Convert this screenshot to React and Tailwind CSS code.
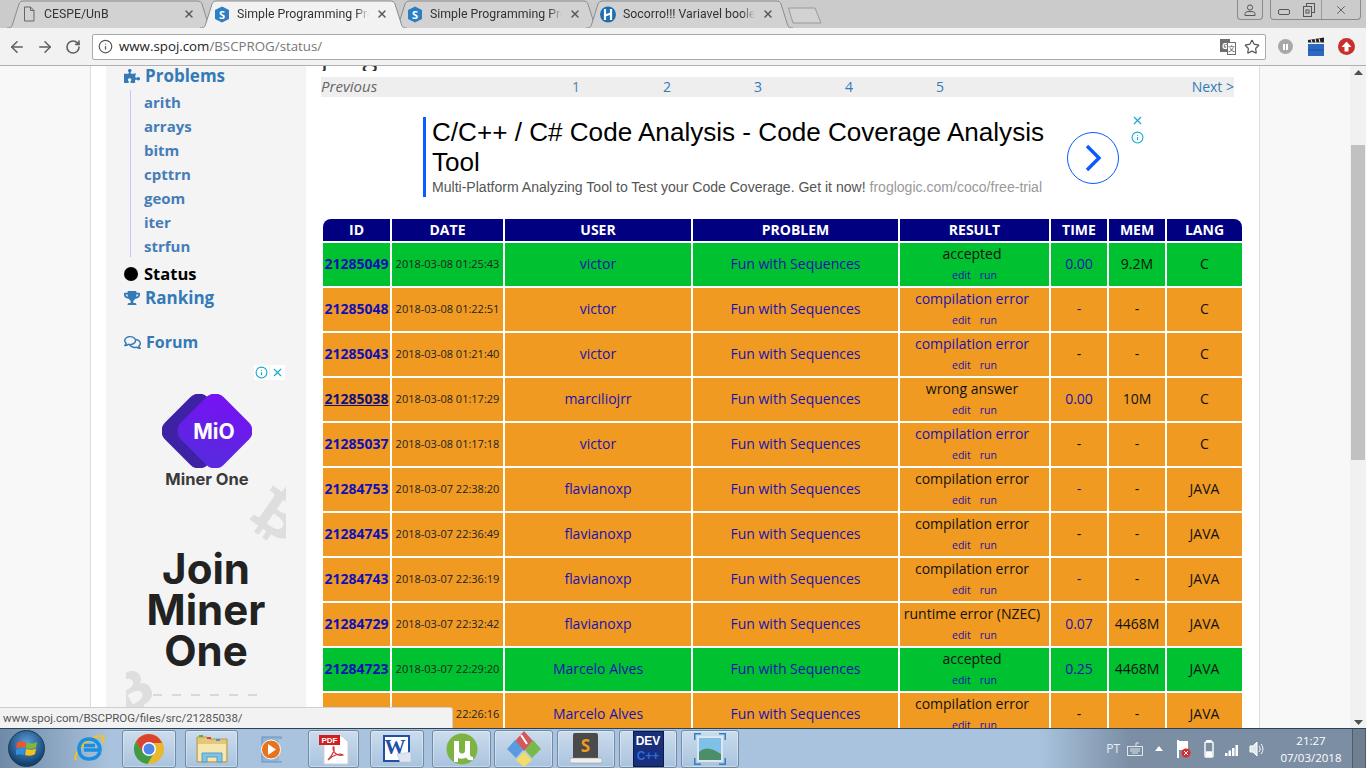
import React from 'react';
import { ArrowLeft, ArrowRight, RotateCw, Info, Star, X } from 'lucide-react';
import { FaPuzzlePiece, FaTrophy, FaRegComments, FaBtc } from 'react-icons/fa';

const BLUE = 'text-[#1a12b0]';

const rows = [
  { id: '21285049', date: '2018-03-08 01:25:43', user: 'victor', result: 'accepted', time: '0.00', mem: '9.2M', lang: 'C', ok: true, timeLink: true },
  { id: '21285048', date: '2018-03-08 01:22:51', user: 'victor', result: 'compilation error', resultLink: true, time: '-', mem: '-', lang: 'C', timeLink: true },
  { id: '21285043', date: '2018-03-08 01:21:40', user: 'victor', result: 'compilation error', resultLink: true, time: '-', mem: '-', lang: 'C' },
  { id: '21285038', date: '2018-03-08 01:17:29', user: 'marciliojrr', result: 'wrong answer', time: '0.00', mem: '10M', lang: 'C', timeLink: true, hover: true },
  { id: '21285037', date: '2018-03-08 01:17:18', user: 'victor', result: 'compilation error', resultLink: true, time: '-', mem: '-', lang: 'C' },
  { id: '21284753', date: '2018-03-07 22:38:20', user: 'flavianoxp', result: 'compilation error', time: '-', mem: '-', lang: 'JAVA', timeLink: true },
  { id: '21284745', date: '2018-03-07 22:36:49', user: 'flavianoxp', result: 'compilation error', time: '-', mem: '-', lang: 'JAVA' },
  { id: '21284743', date: '2018-03-07 22:36:19', user: 'flavianoxp', result: 'compilation error', time: '-', mem: '-', lang: 'JAVA', timeLink: true },
  { id: '21284729', date: '2018-03-07 22:32:42', user: 'flavianoxp', result: 'runtime error (NZEC)', time: '0.07', mem: '4468M', lang: 'JAVA', timeLink: true },
  { id: '21284723', date: '2018-03-07 22:29:20', user: 'Marcelo Alves', result: 'accepted', time: '0.25', mem: '4468M', lang: 'JAVA', ok: true, timeLink: true },
  { id: '21284712', date: '2018-03-07 22:26:16', user: 'Marcelo Alves', result: 'compilation error', time: '-', mem: '-', lang: 'JAVA' },
];

const SpojIcon = () => (
  <svg width="16" height="17" viewBox="0 0 16 17" className="shrink-0">
    <path d="M8 0.5 L15 4 V13 L8 16.5 L1 13 V4 Z" fill="#2d7fc1" />
    <text x="8" y="12.5" textAnchor="middle" fontSize="11" fontWeight="700" fill="#fff" fontFamily="Open Sans">S</text>
  </svg>
);

const DocIcon = () => (
  <svg width="12" height="16" viewBox="0 0 12 16" className="shrink-0" fill="none" stroke="#666" strokeWidth="1">
    <path d="M1.5 1 H7.5 L11 4.5 V15 H1.5 Z M7.5 1 V4.5 H11" />
  </svg>
);

const HiIcon = () => (
  <svg width="16" height="17" viewBox="0 0 16 17" className="shrink-0">
    <circle cx="8" cy="8.5" r="8" fill="#1a6fb5" />
    <path d="M5 3 V14 M11 3 V14" stroke="#fff" strokeWidth="2.2" />
    <path d="M5 9.5 L11 7.5" stroke="#fff" strokeWidth="2.2" />
  </svg>
);

const Tab = ({ title, icon, active, width = 207 }) => (
  <div className={`relative h-[28px] shrink-0 -mr-[14px] ${active ? 'z-10' : ''}`} style={{ width }}>
    <svg width={width} height="28" viewBox={`0 0 ${width} 28`} className="absolute inset-0">
      <path
        d={`M0 28 C5 28 5 26 6 23 L12 4 C13 2 14 1 17 1 H${width - 17} C${width - 14} 1 ${width - 13} 2 ${width - 12} 4 L${width - 6} 23 C${width - 5} 26 ${width - 5} 28 ${width} 28`}
        fill={active ? '#f2f2f2' : '#d2d2d2'}
        stroke="#8c8c8c"
      />
    </svg>
    <div className="relative flex items-center h-[28px] pl-[13px]">
      <span className="w-[18px] flex justify-center shrink-0">{icon}</span>
      <span className="ml-[6px] w-[132px] overflow-hidden whitespace-nowrap font-['Roboto'] text-[12.3px] text-[#333] [mask-image:linear-gradient(90deg,#000_90%,transparent)]">{title}</span>
      <X size={12} strokeWidth={3} className="ml-[7px] text-[#5a5a5a] shrink-0" />
    </div>
  </div>
);

const TabStrip = () => (
  <div className="h-[28px] bg-[#cbcbcb] flex pl-[7px] overflow-hidden relative">
    <Tab title="CESPE/UnB" icon={<DocIcon />} />
    <Tab title="Simple Programming Pro" icon={<SpojIcon />} active />
    <Tab title="Simple Programming Pro" icon={<SpojIcon />} />
    <Tab title="Socorro!!! Variavel boole" icon={<HiIcon />} />
    <svg width="36" height="17" viewBox="0 0 36 17" className="ml-[8px] mt-[7px] shrink-0" fill="#d2d2d2" stroke="#9a9a9a">
      <path d="M1.5 1 H28 L34 16 H6 Z" />
    </svg>
    <div className="ml-auto flex items-start mr-[5px]">
      <div className="w-[26px] h-[20px] border border-t-0 border-[#8a8a8a] rounded-b-[4px] flex items-center justify-center">
        <svg width="12" height="12" viewBox="0 0 12 12" fill="none" stroke="#555"><circle cx="6" cy="3.5" r="2.6" /><path d="M1 11.5 V9.5 C1 8 3 7.5 6 7.5 C9 7.5 11 8 11 9.5 V11.5 Z" /></svg>
      </div>
      <div className="ml-[7px] w-[91px] h-[20px] border border-t-0 border-[#8a8a8a] rounded-b-[4px] flex items-center">
        <div className="w-[26px] flex justify-center"><div className="w-[12px] h-[6px] border border-[#555] rounded-[2px] mt-[4px]" /></div>
        <div className="w-[25px] h-[19px] flex justify-center items-center border-r border-[#9a9a9a]">
          <svg width="12" height="14" viewBox="0 0 12 14" fill="none" stroke="#555"><rect x="3.5" y="0.5" width="8" height="9" /><rect x="0.5" y="3.5" width="8" height="10" fill="#cbcbcb" /><rect x="3" y="7" width="3" height="3" /></svg>
        </div>
        <div className="flex-1 flex justify-center"><X size={14} strokeWidth={1.5} className="text-[#555]" /></div>
      </div>
    </div>
  </div>
);

const TranslateIcon = () => (
  <svg width="16" height="16" viewBox="0 0 16 16">
    <rect x="0" y="0" width="10" height="13" fill="#6e6e6e" />
    <text x="5" y="10" textAnchor="middle" fontSize="8" fontWeight="700" fill="#fff" fontFamily="Open Sans">G</text>
    <rect x="7.5" y="3.5" width="8" height="12" fill="#fff" stroke="#6e6e6e" />
    <text x="11.5" y="12" textAnchor="middle" fontSize="7" fill="#555" fontFamily="Noto Sans CJK SC">文</text>
  </svg>
);

const ClapperIcon = () => (
  <svg width="18" height="19" viewBox="0 0 18 19">
    <rect x="1" y="7" width="16" height="12" fill="#2a68c4" />
    <path d="M1 13 H17" stroke="#1d4e9a" />
    <path d="M1 3 L17 0.5 V5.5 H1 Z" fill="#222" />
    <path d="M4 2.5 L5 5.5 M8 2 L9 5.5 M12 1.5 L13 5.5" stroke="#fff" />
  </svg>
);

const Toolbar = () => (
  <div className="h-[38px] bg-[#f2f2f2] border-b border-[#b0b0b0] flex items-center shrink-0">
    <ArrowLeft size={18} strokeWidth={2} className="ml-[8px] text-[#5f5f5f]" />
    <ArrowRight size={18} strokeWidth={2} className="ml-[10px] text-[#5f5f5f]" />
    <RotateCw size={16} strokeWidth={2.4} className="ml-[11px] text-[#5f5f5f]" />
    <div className="ml-[11px] w-[1174px] h-[26px] bg-white border border-[#a9a9a9] rounded-[2px] flex items-center">
      <Info size={15} strokeWidth={2} className="ml-[5px] text-[#5a5a5a]" />
      <span className="ml-[6px] text-[13.3px] text-[#222]">www.spoj.com<span className="text-[#777]">/BSCPROG/status/</span></span>
      <div className="ml-auto flex items-center">
        <TranslateIcon />
        <Star size={16} strokeWidth={1.8} className="ml-[8px] mr-[5px] text-[#555]" />
      </div>
    </div>
    <div className="ml-[12px] w-[15px] h-[15px] rounded-full bg-[#a8a8a8] flex items-center justify-center gap-[1px]">
      <span className="w-[2px] h-[6px] bg-white" /><span className="w-[2px] h-[6px] bg-white" />
    </div>
    <span className="ml-[14px]"><ClapperIcon /></span>
    <div className="ml-[13px] w-[17px] h-[17px] rounded-full bg-[#c9302c] flex items-center justify-center">
      <svg width="11" height="11" viewBox="0 0 11 11" fill="#fff"><path d="M5.5 0.5 L10.5 6 H7.5 V10.5 H3.5 V6 H0.5 Z" /></svg>
    </div>
  </div>
);

const MinerAd = () => (
  <div className="relative mt-[11px] ml-[20px] w-[160px] h-[345px] flex flex-col items-center overflow-hidden">
    <FaBtc size={58} className="absolute top-[120px] left-[124px] rotate-[35deg] text-[#dedede]" />
    <FaBtc size={52} className="absolute top-[300px] left-[-22px] rotate-[-30deg] text-[#dedede]" />
    <div className="absolute top-0 right-[1px] flex gap-[1px] text-[#12a8d0]">
      <span className="w-[15px] h-[15px] bg-white flex items-center justify-center"><Info size={13} /></span>
      <span className="w-[15px] h-[15px] bg-white flex items-center justify-center"><X size={13} /></span>
    </div>
    <svg width="90" height="74" viewBox="0 0 90 74" className="relative mt-[29px] ml-[2px] shrink-0">
      <defs>
        <linearGradient id="mio" x1="0" y1="0" x2="0.5" y2="1">
          <stop offset="0" stopColor="#7a10f5" />
          <stop offset="1" stopColor="#5a28e0" />
        </linearGradient>
      </defs>
      <rect x="7" y="7" width="60" height="60" rx="12" transform="rotate(45 37 37)" fill="#3e22a6" />
      <rect x="23" y="7" width="60" height="60" rx="12" transform="rotate(45 53 37)" fill="url(#mio)" />
      <text x="52" y="45" textAnchor="middle" fontSize="21" fontWeight="700" fill="#fff" fontFamily="Inter">MiO</text>
    </svg>
    <div className="relative mt-[1px] ml-[2px] text-[16.5px] font-bold text-[#3a3a3a] font-['Inter'] leading-[20px]">Miner One</div>
    <div className="relative mt-[59px] text-center text-[42px] font-bold leading-[41px] text-[#222] font-['Inter']">Join<br />Miner<br />One</div>
    <div className="absolute top-[329px] left-[27px] flex gap-[10px]">
      {[0, 1, 2, 3, 4, 5].map((i) => <span key={i} className="w-[9px] h-[2px] bg-[#d8d8d8]" />)}
    </div>
  </div>
);

const Sidebar = () => (
  <aside className="w-[200px] shrink-0 bg-[#f4f4f4] font-['Open_Sans'] font-bold">
    <div className="pl-[18px]">
      <a className="flex items-center h-[20px] text-[17px] text-[#337ab7]"><FaPuzzlePiece size={16} /><span className="ml-[5px]">Problems</span></a>
      <ul className="ml-[6px] mt-[4px] pl-[13px] border-l border-[#c4c4ff] h-[167px] text-[15px] text-[#467db8] leading-[24px]">
        {['arith', 'arrays', 'bitm', 'cpttrn', 'geom', 'iter', 'strfun'].map((s) => <li key={s}>{s}</li>)}
      </ul>
      <div className="mt-[5px] flex items-center h-[24px] text-[16.5px] text-black">
        <span className="w-[14px] h-[14px] rounded-full bg-black" /><span className="ml-[6px]">Status</span>
      </div>
      <a className="flex items-center h-[24px] text-[17px] text-[#337ab7]"><FaTrophy size={16} /><span className="ml-[5px]">Ranking</span></a>
      <a className="mt-[20px] flex items-center h-[24px] text-[16px] text-[#337ab7]"><FaRegComments size={17} /><span className="ml-[5px]">Forum</span></a>
    </div>
    <MinerAd />
  </aside>
);

const Pager = () => (
  <div className="mt-[6px] w-[913px] h-[20px] bg-[#eee] flex items-center text-[14px] leading-[20px] text-[#337ab7]">
    <span className="w-[209.5px] pb-[2px] italic text-[15px] text-[#666]">Previous</span>
    {[1, 2, 3, 4, 5].map((n) => (
      <span key={n} className={`w-[91px] text-center ${n === 1 ? 'text-[#5f7f98]' : ''}`}>{n}</span>
    ))}
    <span className="ml-auto">Next &gt;</span>
  </div>
);

const TextAd = () => (
  <div className="mt-[20px] h-[80px] ml-[102px] w-[724px] flex font-['Liberation_Sans']">
    <div className="w-[627px] border-l-[3px] border-[#0a5cff] pl-[6px]">
      <div className="text-[26.1px] leading-[30px] text-black">C/C++ / C# Code Analysis - Code Coverage Analysis Tool</div>
      <div className="mt-[2px] text-[14.05px] leading-[17px] text-[#555] whitespace-nowrap">
        Multi-Platform Analyzing Tool to Test your Code Coverage. Get it now! <span className="text-[#999]">froglogic.com/coco/free-trial</span>
      </div>
    </div>
    <div className="ml-[17px] mt-[15px] w-[52px] h-[52px] shrink-0 rounded-full border border-[#0a5cff] flex items-center justify-center">
      <svg width="18" height="28" viewBox="0 0 18 28" fill="none" stroke="#0a5cff" strokeWidth="3.4"><path d="M3 2 L15 14 L3 26" /></svg>
    </div>
    <div className="ml-[12px] flex flex-col items-center text-[#12a8d0] shrink-0">
      <X size={13} className="mt-[-3px]" />
      <Info size={13} className="mt-[4px]" />
    </div>
  </div>
);

const StatusTable = () => (
  <table className="mt-[20px] w-[923px] table-fixed border-separate [border-spacing:2px] text-[14px] text-center text-[#111]">
    <colgroup>
      {[67, 111, 186, 205, 149, 56, 56, 75].map((w, i) => <col key={i} style={{ width: w }} />)}
    </colgroup>
    <thead>
      <tr className="h-[22px] bg-[#000080] text-white font-bold text-[14px] leading-[20px]">
        <th className="p-0 pb-[1px] rounded-tl-[8px]">ID</th>
        <th className="p-0 pb-[1px]">DATE</th>
        <th className="p-0 pb-[1px]">USER</th>
        <th className="p-0 pb-[1px]">PROBLEM</th>
        <th className="p-0 pb-[1px]">RESULT</th>
        <th className="p-0 pb-[1px]">TIME</th>
        <th className="p-0 pb-[1px]">MEM</th>
        <th className="p-0 pb-[1px] rounded-tr-[8px]">LANG</th>
      </tr>
    </thead>
    <tbody>
      {rows.map((r) => (
        <tr key={r.id} className={`h-[43px] ${r.ok ? 'bg-[#00c12f]' : 'bg-[#f09a22]'}`}>
          <td className={`p-0 pb-[2px] font-bold ${r.hover ? 'underline text-[#10107a]' : 'text-[#1010b8]'}`}>{r.id}</td>
          <td className="p-0 text-[11px] text-[#222]">{r.date}</td>
          <td className={`p-0 pb-[2px] ${BLUE}`}>{r.user}</td>
          <td className={`p-0 pb-[2px] ${BLUE}`}>Fun with Sequences</td>
          <td className="p-0 pb-[2px]">
            <div className={`-mt-[1px] leading-[19px] pr-[5px] ${r.resultLink ? BLUE : ''}`}>{r.result}</div>
            <div className={`mt-[5px] leading-[15px] text-[10.5px] flex justify-center gap-[9px] ${BLUE}`}><span>edit</span><span>run</span></div>
          </td>
          <td className={`p-0 pb-[2px] ${r.timeLink ? BLUE : ''}`}>{r.time}</td>
          <td className="p-0 pb-[2px]">{r.mem}</td>
          <td className="p-0 pb-[2px]">{r.lang}</td>
        </tr>
      ))}
    </tbody>
  </table>
);

const Scrollbar = () => (
  <div className="w-[16px] shrink-0 bg-[#f1f1f1] flex flex-col items-center relative">
    <svg width="9" height="5" viewBox="0 0 9 5" className="mt-[4px] shrink-0" fill="#505050"><path d="M4.5 0 L9 5 H0 Z" /></svg>
    <div className="w-[14px] h-[315px] bg-[#c1c1c1] mt-[70px] shrink-0" />
    <svg width="9" height="5" viewBox="0 0 9 5" className="mt-auto mb-[3px] shrink-0" fill="#505050"><path d="M4.5 5 L9 0 H0 Z" /></svg>
  </div>
);

const Page = () => (
  <div className="relative flex-1 flex overflow-hidden min-h-0 font-['Open_Sans']">
    <div className="flex-1 flex bg-[#f8f8f8] overflow-hidden">
      <div className="ml-[90px] w-[1170px] h-[800px] shrink-0 bg-white border-x border-[#dcdcdc] pl-[15px] flex">
        <Sidebar />
        <main className="pl-[15px]">
          <div className="-mt-[27px] h-[32px] text-[28px] leading-[32px] text-[#333] overflow-hidden">judge status</div>
          <Pager />
          <TextAd />
          <StatusTable />
        </main>
      </div>
    </div>
    <Scrollbar />
    <div className="absolute left-0 bottom-0 w-[453px] h-[21px] bg-[#f2f2f2] border-t border-r border-[#cfcfcf] rounded-tr-[3px] pl-[3px] font-['Roboto'] text-[11.5px] leading-[20px] text-[#555]">
      www.spoj.com/BSCPROG/files/src/21285038/
    </div>
  </div>
);

/* taskbar icons */
const WinOrb = () => (
  <div className="w-[37px] h-[37px] rounded-full border border-[#1c3a58] bg-[radial-gradient(circle_at_50%_35%,#5ea0d8,#123f6e_75%)] flex items-center justify-center">
    <svg width="22" height="20" viewBox="0 0 22 20">
      <path d="M1 4 C4 2 7 2 10 3.5 L9 9 C6 8 3.5 8 0 9.5 Z" fill="#f0562c" />
      <path d="M11 3.5 C14 5 17 5 21 3 L20 8.5 C17 10 14 10 10 9 Z" fill="#7fbb32" />
      <path d="M0 10.5 C3.5 9 6 9 9 10 L8 16 C5 15 2.5 15 -1 16.5 Z" fill="#2f8fe0" />
      <path d="M10 10 C14 11 17 11 20 9.5 L19 15 C16 17 13 17 9 16 Z" fill="#f5c21c" />
    </svg>
  </div>
);

const IeIcon = () => (
  <svg width="32" height="32" viewBox="0 0 32 32" fill="none">
    <path d="M3 27 C0 22 12 6 26 3 C31 2 32 5 29 10" stroke="#f2c21f" strokeWidth="2.2" />
    <path d="M27 19 C25 24 21 26 16 26 C10 26 6 22 6 16 C6 10 10 6 16 6 C22 6 27 10 27 17 H11 M11 12.5 H22" stroke="#1c8ee0" strokeWidth="3.6" />
  </svg>
);

const ChromeIcon = () => (
  <svg width="30" height="30" viewBox="0 0 30 30">
    <circle cx="15" cy="15" r="15" fill="#e8b92f" />
    <path d="M15 0 A15 15 0 0 0 2 7.5 L8.5 19 L15 9 H28 A15 15 0 0 0 15 0 Z" fill="#d9432f" />
    <path d="M2 7.5 A15 15 0 0 0 13.5 30 L20 19 H9 Z" fill="#3f9c44" />
    <circle cx="15" cy="15" r="7" fill="#fff" />
    <circle cx="15" cy="15" r="5.5" fill="#4a87e8" />
  </svg>
);

const FolderIcon = () => (
  <svg width="32" height="30" viewBox="0 0 32 30">
    <path d="M1 3 H11 L13 5 H31 V28 H1 Z" fill="#e6c777" stroke="#b59a52" />
    <rect x="3" y="1" width="4" height="2" fill="#4fb548" />
    <rect x="11" y="3" width="4" height="2" fill="#d9432f" />
    <rect x="20" y="5" width="4" height="2" fill="#3a9be0" />
    <path d="M2 10 H30 V27 H2 Z" fill="#f6e7b0" />
    <path d="M6 28 V19 H26 V28 H21 V23 H11 V28 Z" fill="#7cc3e8" stroke="#5a9cc4" />
  </svg>
);

const MediaIcon = () => (
  <svg width="30" height="30" viewBox="0 0 30 30">
    <rect x="4" y="3" width="19" height="25" fill="#8fb5d6" stroke="#6d94b8" />
    <rect x="21" y="5" width="3" height="22" fill="#a7c5df" />
    <circle cx="13" cy="15.5" r="9.5" fill="#e8731c" stroke="#fff" />
    <path d="M10 10 L18 15.5 L10 21 Z" fill="#fff" />
  </svg>
);

const PdfIcon = () => (
  <svg width="32" height="32" viewBox="0 0 32 32">
    <path d="M6 3 H24 L30 9 V31 H6 Z" fill="#fff" stroke="#d0d0d0" />
    <rect x="1" y="2" width="21" height="10" fill="#cf1f1f" />
    <text x="11.5" y="10" textAnchor="middle" fontSize="8" fontWeight="700" fill="#fff" fontFamily="Liberation Sans">PDF</text>
    <path d="M10 27 C14 23 17 17 16 14 C15 13 14 16 17 20 C19 22 23 23 25 22 C23 20 16 21 10 27 Z" fill="none" stroke="#d23a3a" strokeWidth="1.2" />
  </svg>
);

const WordIcon = () => (
  <svg width="30" height="30" viewBox="0 0 30 30">
    <rect x="1" y="1" width="27" height="27" fill="#1f4fa8" />
    <rect x="3" y="3" width="23" height="23" fill="#fff" />
    <text x="13" y="20" textAnchor="middle" fontSize="21" fontWeight="700" fill="#1f4fa8" fontFamily="Liberation Serif">W</text>
    <path d="M15 20 L29 18 V28 H18 Z" fill="#dfe6f2" stroke="#b0bfd8" strokeWidth="0.5" />
  </svg>
);

const TorrentIcon = () => (
  <svg width="32" height="32" viewBox="0 0 32 32">
    <circle cx="16" cy="16" r="15.5" fill="#7cb342" />
    <path d="M8 8 H13 V17 C13 19.5 14 20.5 16 20.5 C18 20.5 19 19.5 19 17 V8 H24 V21 C24 23 25 24 27 24 V27 C23 27.5 21 26.5 20 24.5 C18 26 14 26 12 25 V29 H8 Z" fill="#fff" />
  </svg>
);

const GitIcon = () => (
  <svg width="34" height="36" viewBox="0 0 34 36">
    <path d="M17 0 L8 10 L17 20 L26 10 Z" fill="#d24c4c" opacity="0.9" />
    <path d="M8 9 L0 18 L9 27 L16 19 Z" fill="#5a9be0" />
    <path d="M26 9 L34 18 L25 27 L18 19 Z" fill="#79b84a" />
    <path d="M17 21 L9 29 L17 36 L25 29 Z" fill="#f2dc6a" />
    <path d="M14 4 L20 13" stroke="#fff" strokeWidth="2" />
  </svg>
);

const SublimeIcon = () => (
  <svg width="32" height="32" viewBox="0 0 32 32">
    <rect x="3" y="0" width="25" height="27" rx="2" fill="#4a4a4a" />
    <rect x="0" y="25" width="32" height="5" rx="1.5" fill="#eee" stroke="#888" strokeWidth="0.5" />
    <text x="15.5" y="19" textAnchor="middle" fontSize="17" fontWeight="700" fill="#f09a22" fontFamily="Open Sans">S</text>
  </svg>
);

const DevIcon = () => (
  <div className="w-[31px] h-[36px] bg-[#1a2f7c] border border-[#0e1a44] flex flex-col items-center font-['Liberation_Sans'] font-bold leading-[14px]">
    <span className="text-[12px] text-white mt-[2px]">DEV</span>
    <span className="text-[12px] text-[#2a6be0] mt-[1px]">C++</span>
  </div>
);

const PicIcon = () => (
  <svg width="32" height="32" viewBox="0 0 32 32">
    <rect x="3" y="3" width="26" height="26" fill="#dbe6ee" />
    <rect x="5" y="5" width="22" height="22" fill="#7fc0e8" />
    <path d="M5 19 C12 13 18 15 27 21 V27 H5 Z" fill="#4b8f6a" />
    <path d="M0 7 V0 H7 M25 0 H32 V7 M32 25 V32 H25 M7 32 H0 V25" fill="none" stroke="#2f7fc4" strokeWidth="3" />
  </svg>
);

const TaskBtn = ({ w, ml, children, flat }) => (
  <div
    style={{ width: w, marginLeft: ml }}
    className={`h-[38px] mt-[1px] shrink-0 flex items-center justify-center rounded-[3px] ${flat ? '' : 'border border-[#6f8ba6] bg-gradient-to-b from-[#dbe7f2]/70 to-[#a9c3de]/50 shadow-[inset_0_0_0_1px_rgba(255,255,255,0.35)]'}`}
  >
    {children}
  </div>
);

const Taskbar = () => (
  <div className="h-[40px] shrink-0 border-t border-[#2f4154] bg-[linear-gradient(90deg,#6f8aa6_0,#a9c3de_110px,#a9c3de_1040px,#7b8ea4_1130px,#7b8ea4_100%)] flex relative">
    <div className="ml-[8px] shrink-0 flex items-center"><WinOrb /></div>
    <TaskBtn w={34} ml={27} flat><IeIcon /></TaskBtn>
    <TaskBtn w={54} ml={16}><ChromeIcon /></TaskBtn>
    <TaskBtn w={53} ml={9}><FolderIcon /></TaskBtn>
    <TaskBtn w={60} ml={5} flat><MediaIcon /></TaskBtn>
    <TaskBtn w={51} ml={5}><PdfIcon /></TaskBtn>
    <TaskBtn w={54} ml={11}><WordIcon /></TaskBtn>
    <TaskBtn w={59} ml={8}><TorrentIcon /></TaskBtn>
    <TaskBtn w={59} ml={3}><GitIcon /></TaskBtn>
    <TaskBtn w={58} ml={4}><SublimeIcon /></TaskBtn>
    <TaskBtn w={58} ml={4}><DevIcon /></TaskBtn>
    <TaskBtn w={58} ml={4}><PicIcon /></TaskBtn>

    <div className="ml-auto flex items-center text-[#e8eef4] font-['Open_Sans']">
      <span className="text-[12px]">PT</span>
      <svg width="16" height="16" viewBox="0 0 16 16" className="ml-[7px]" fill="none" stroke="#dde4ea"><rect x="0.5" y="5.5" width="15" height="9" /><path d="M3 8 H13 M3 10 H13 M5 12 H11 M9 5 V2 H12" /></svg>
      <svg width="8" height="5" viewBox="0 0 8 5" className="ml-[12px]" fill="#fff"><path d="M4 0 L8 5 H0 Z" /></svg>
      <svg width="14" height="18" viewBox="0 0 14 18" className="ml-[14px]"><path d="M1 0 V18" stroke="#fff" strokeWidth="2" /><path d="M2 1 H11 V10 H2 Z" fill="#fff" /><circle cx="9" cy="13" r="4.5" fill="#d92b2b" /><path d="M7 11 L11 15 M11 11 L7 15" stroke="#fff" /></svg>
      <svg width="10" height="18" viewBox="0 0 10 18" className="ml-[13px]" fill="none" stroke="#fff" strokeWidth="1.4"><rect x="1" y="2" width="8" height="15" rx="1" /><rect x="3" y="0.5" width="4" height="1" /><rect x="2.5" y="12" width="5" height="4" fill="#fff" /></svg>
      <svg width="16" height="14" viewBox="0 0 16 14" className="ml-[11px]" fill="#fff"><rect x="0" y="11" width="2.5" height="3" /><rect x="3.5" y="8.5" width="2.5" height="5.5" /><rect x="7" y="6" width="2.5" height="8" /><rect x="10.5" y="3" width="2.5" height="11" /></svg>
      <svg width="16" height="18" viewBox="0 0 16 18" className="ml-[8px]" fill="none" stroke="#fff"><path d="M1 6 H4 L8 2 V16 L4 12 H1 Z" fill="#dfe6ec" /><path d="M10 6 C11.5 8 11.5 10 10 12 M12 4 C14.5 7 14.5 11 12 14" /></svg>
      <div className="ml-[6px] w-[80px] text-center text-white text-[11.5px] leading-[17px]">21:27<br />07/03/2018</div>
      <div className="ml-[1px] w-[14px] h-[39px] bg-[#6f7f90] border-l border-[#4d5b6a] border-r" />
    </div>
  </div>
);

export default function App() {
  return (
    <div className="w-[1366px] h-[768px] overflow-hidden flex flex-col font-['Open_Sans'] bg-white">
      <TabStrip />
      <Toolbar />
      <Page />
      <Taskbar />
    </div>
  );
}
